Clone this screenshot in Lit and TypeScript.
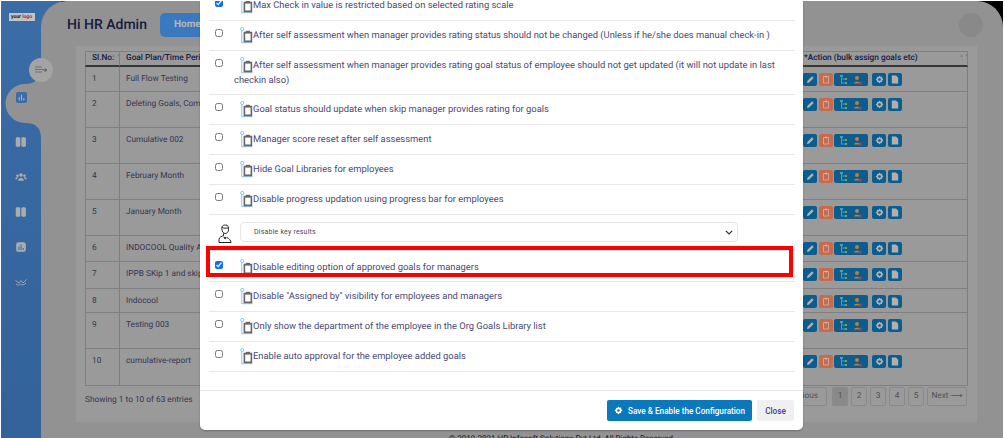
import { LitElement, html, css, svg } from "lit";
import { customElement } from "lit/decorators.js";

const ROWS: [string, string, number][] = [
  ["1", "Full Flow Testing", 25],
  ["2", "Deleting Goals, Completion", 36],
  ["3", "Cumulative 002", 36],
  ["4", "February Month", 36],
  ["5", "January Month", 36],
  ["6", "INDOCOOL Quality Appraisal", 26],
  ["7", "IPPB SKip 1 and skip 2", 27],
  ["8", "Indocool", 24],
  ["9", "Testing 003", 36],
  ["10", "cumulative-report", 37],
];

type Opt = { label: string; checked?: boolean; mark?: boolean; tall?: boolean };
const OPTIONS_A: Opt[] = [
  { label: "Max Check in value is restricted based on selected rating scale", checked: true },
  { label: "After self assessment when manager provides rating status should not be changed (Unless if he/she does manual check-in )" },
  { label: "After self assessment when manager provides rating goal status of employee should not get updated (it will not update in last checkin also)", tall: true },
  { label: "Goal status should update when skip manager provides rating for goals" },
  { label: "Manager score reset after self assessment" },
  { label: "Hide Goal Libraries for employees" },
  { label: "Disable progress updation using progress bar for employees" },
];
const OPTIONS_B: Opt[] = [
  { label: "Disable \"Assigned by\" visibility for employees and managers" },
  { label: "Only show the department of the employee in the Org Goals Library list" },
  { label: "Enable auto approval for the employee added goals" },
];

const clip = html`<svg class="clip" viewBox="0 0 13 17" width="13" height="17">
  <circle cx="2.2" cy="2" r="1.6" fill="none" stroke="#8cc4ec" stroke-width="1"/>
  <path d="M1.8 3.5V15.7H12.5" fill="none" stroke="#8cc4ec" stroke-width="1"/>
  <path d="M4.4 5.6H11.4V14.4H4.4Z" fill="none" stroke="#666" stroke-width="1.6"/>
  <path d="M5.8 3.8H10V6.2H5.8Z" fill="#666"/>
</svg>`;

const book = svg`<rect x="1" y="1.5" width="5.2" height="11" rx="1.5"/><rect x="7.4" y="1.5" width="5.2" height="11" rx="1.5"/>`;
const chart = svg`<rect x="1.5" y="1.5" width="11" height="11" rx="2.5"/><path d="M4.6 6.5V10.5M7 3.8V10.5M9.4 8V10.5" stroke="#4a84c4" stroke-width="1.2"/>`;

@customElement("app-root")
export class AppRoot extends LitElement {
  static styles = css`
    :host { display: block; width: 1005px; height: 438px; background: #fff; overflow: hidden; font-family: Roboto, "Liberation Sans", sans-serif; text-rendering: geometricPrecision; }
    *, *::after { box-sizing: border-box; }
    .shell {
      position: relative; margin: 1px 2px 0 1px; height: 437px; display: flex; overflow: hidden;
      background: linear-gradient(to right, transparent 60px, #000 60px), linear-gradient(#4a88d0, #417bc1);
    }
    .side { flex: none; width: 40px; position: relative; display: flex; flex-direction: column; align-items: center; }
    .logo { width: 26px; height: 8px; margin: 12px 0 0 1px; background: #f4f4f4; font: 700 5px/8px Roboto, sans-serif; color: #222; text-align: center; white-space: nowrap; }
    .logo span { color: #c33; }
    .nav { margin-top: 114px; display: flex; flex-direction: column; align-items: center; gap: 21px; }
    .nav svg { display: block; fill: #d8d8d8; }
    .lobe { position: absolute; left: 0; top: 50px; width: 44px; height: 90px; }
    .lobe-icon { position: absolute; left: 15px; top: 91px; width: 11px; height: 11px; border-radius: 2px; background: #4a88d0; display: flex; align-items: center; justify-content: center; }
    .toggle { position: absolute; left: 28px; top: 57px; width: 24px; height: 24px; border-radius: 50%; background: #cecece; display: flex; align-items: center; justify-content: center; z-index: 1; }
    .main {
      flex: 1; height: 470px; background: #b7b7b7; border-radius: 26px 26px 30px 26px;
      padding: 0 26px 0 35px; display: flex; flex-direction: column; min-width: 0;
    }
    .top { height: 45px; display: flex; align-items: center; flex: none; }
    .hi { margin: 3px 0 0 -9px; font: 500 14px/1 Roboto, sans-serif; color: #1d2450; }
    .home { margin: 2px 0 0 13px; width: 60px; height: 24px; background: #4996f0; border-radius: 5px; color: #e4e4e4; font: 700 10px/24px Roboto, sans-serif; padding-left: 14px; }
    .avatar { margin: 2px -6px 0 auto; width: 24px; height: 24px; border-radius: 50%; background: #acacac; }
    .card { background: #c1c1c1; padding: 5px 9px 0 9px; height: 376px; }
    table { width: 883px; border-collapse: separate; border-spacing: 0; table-layout: fixed; font-size: 8.3px; color: #45456a; }
    th { height: 16px; font: 500 8.3px/13px Roboto, sans-serif; color: #1d2450; text-align: left; padding: 0 0 0 6px; border-top: 1px solid #9f9f9f; border-left: 1px solid #9f9f9f; border-bottom: 2px solid #444; white-space: nowrap; overflow: hidden; position: relative; }
    td { vertical-align: top; padding: 6px 0 0 6px; line-height: 12px; border-left: 1px solid #9f9f9f; border-bottom: 1px solid #9f9f9f; white-space: nowrap; overflow: hidden; }
    th:last-child { border-right: 1px solid #9f9f9f; padding-left: 5px; }
    td:last-child { border-right: 1px solid #9f9f9f; padding-left: 4px; }
    .sort { position: absolute; right: 3px; top: 2px; font-size: 5px; line-height: 5px; color: #a4a4a4; width: 5px; }
    .acts { display: flex; align-items: flex-start; gap: 2px; }
    .b { height: 13px; width: 14px; border-radius: 2px; background: #1073b1; display: flex; align-items: center; justify-content: center; flex: none; }
    .b.o { background: #fb8660; margin-right: 1px; }
    .b.g { width: 34px; justify-content: space-around; padding: 0 3px; margin-left: -2px; margin-right: 2px; }
    .foot { display: flex; justify-content: space-between; align-items: flex-start; margin-top: 1px; }
    .info { font-size: 8.3px; color: #45456a; padding-top: 8px; }
    .pager { display: flex; gap: 3px; margin-right: 1px; font-size: 8.3px; color: #666; }
    .pager span { height: 19px; border: 1px solid #adadad; border-radius: 2px; line-height: 17px; text-align: center; width: 16px; }
    .pager .on { background: #acacac; }
    .pager .wide { width: 40px; }
    .pager .prev { width: 60px; margin-right: 2px; }
    .copy { font-size: 8px; color: #222; margin: 12px 0 0 373px; white-space: nowrap; line-height: 10px; }
    .dim { position: absolute; inset: 0; background: rgba(0, 0, 0, .2); z-index: 2; }
    .modal { position: absolute; z-index: 3; left: 199px; top: -1px; width: 603px; height: 430px; background: #fff; border-radius: 0 0 5px 5px; display: flex; flex-direction: column; box-shadow: 0 1px 2px rgba(0,0,0,.25); }
    .body { flex: 1; min-height: 0; overflow: hidden; padding: 0 8px 0 9px; }
    .list { margin-top: -9px; position: relative; }
    .row { display: flex; height: 30px; padding-top: 6px; border-bottom: 1px solid #e8e8e8; color: #4a4a74; font-size: 9.4px; line-height: 14px; }
    .row.tall { height: 44px; }
    .row input { flex: none; width: 8px; height: 8px; margin: 2px 11px 0 6px; accent-color: #0d6efd; }
    .label { flex: 1; min-width: 0; }
    .clip { vertical-align: -6px; margin-left: 6px; }
    .sel { height: 36px; display: flex; align-items: center; border-bottom: 1px solid #e8e8e8; padding-left: 9px; padding-bottom: 1px; }
    .sel svg { flex: none; margin-right: 8px; margin-top: 3px; }
    select { appearance: none; width: 498px; height: 20px; border: 1px solid #e6e6e6; border-radius: 4px; color: #4a4a5a; font: 400 7px Roboto, sans-serif; letter-spacing: .2px; padding-left: 13px;
      background: #fff url("data:image/svg+xml,%3Csvg xmlns='http://www.w3.org/2000/svg' width='8' height='5' viewBox='0 0 8 5'%3E%3Cpath d='M.8.8 4 4l3.2-3.2' fill='none' stroke='%23333' stroke-width='1.2'/%3E%3C/svg%3E") no-repeat right 4px center; }
    .row.marked { position: relative; height: 31px; padding-top: 8px; }
    .marked::after { content: ""; position: absolute; left: -3px; right: 2px; top: -5px; height: 31px; border: 4px solid #f00; pointer-events: none; }
    .actions { flex: none; height: 40px; border-top: 1px solid #e8e8e8; display: flex; justify-content: flex-end; align-items: flex-start; gap: 5px; padding: 9px 9px 0 0; }
    .save { width: 145px; height: 21px; border: 0; border-radius: 2px; background: #0a78bb; color: #fff; font: 500 8.2px Roboto, sans-serif; display: flex; align-items: center; justify-content: center; gap: 5px; white-space: nowrap; padding: 0; }
    .close { width: 37px; height: 21px; border: 0; border-radius: 2px; background: #f0f0f3; color: #4a3f80; font: 500 8.2px Roboto, sans-serif; padding: 0; }
  `;

  private opt(o: Opt) {
    return html`<div class="row ${o.mark ? "marked" : ""} ${o.tall ? "tall" : ""}">
      <input type="checkbox" .checked=${!!o.checked} />
      <div class="label">${clip}${o.label}</div>
    </div>`;
  }

  private actions() {
    return html`<div class="acts">
      <span class="b"><svg width="9" height="9" viewBox="0 0 9 9"><path d="M1 8 1.5 5.8 6 1.3 7.7 3 3.2 7.5Z" fill="#ddd"/></svg></span>
      <span class="b o"><svg width="8" height="9" viewBox="0 0 8 9"><path d="M1.5 1.5H6.5V8H1.5Z" fill="none" stroke="#fff" stroke-opacity=".6"/><path d="M3 .8H5V2.4H3Z" fill="#fff" fill-opacity=".6"/></svg></span>
      <span class="b g">
        <svg width="8" height="10" viewBox="0 0 8 10"><path d="M1.5 1V8.5M1.5 4H5.5M1.5 8H5.5" stroke="#5fc8c8" stroke-width="1" fill="none"/><rect x="0" y="0" width="3" height="2" fill="#5fc8c8"/><rect x="5" y="3" width="2" height="2" fill="#8bcf6a"/><rect x="5" y="7" width="2" height="2" fill="#8bcf6a"/></svg>
        <svg width="9" height="10" viewBox="0 0 9 10"><circle cx="4" cy="3" r="2" fill="#f0a040"/><path d="M1 8.5C1 6 7 6 7 8.5Z" fill="#f0a040"/><circle cx="7.3" cy="8" r="1.6" fill="#e0504a"/></svg>
      </span>
      <span class="b"><svg width="9" height="9" viewBox="0 0 10 10"><path d="M5 .6 6 2l1.7-.3.3 1.7L9.4 5 8 6l-.3 1.7L6 8l-1 1.4L4 8l-1.7-.3L2 6 .6 5 2 4l.3-1.7L4 2Z" fill="#ddd"/><circle cx="5" cy="5" r="1.4" fill="#1073b1"/></svg></span>
      <span class="b"><svg width="8" height="9" viewBox="0 0 8 9"><path d="M.8.5H5L7.2 2.7V8.5H.8Z" fill="#ddd"/></svg></span>
    </div>`;
  }

  render() {
    return html`<div class="shell">
      <aside class="side">
        <div class="logo">your <span>logo</span></div>
        <svg class="lobe" viewBox="0 0 44 90"><path d="M40 13C40 28 34 33 24 33A19.5 19.5 0 0 0 24 72C34 72 40 76 40 87Z" fill="#b7b7b7"/></svg>
        <div class="toggle"><svg width="12" height="8" viewBox="0 0 12 8"><path d="M0 1H7M0 3.5H8M0 6H7" stroke="#8a8a8a" stroke-width="1"/><path d="M8 4H11.5M10 2.3 11.7 4 10 5.7" stroke="#666" fill="none" stroke-width="1"/></svg></div>
        <div class="lobe-icon"><svg width="9" height="9" viewBox="0 0 9 9"><path d="M2.2 4V7.5M4.5 1.8V7.5M6.8 5V7.5" stroke="#ddd" stroke-width="1.1"/></svg></div>
        <nav class="nav">
          <svg width="14" height="14" viewBox="-1 -1 16 16">${book}</svg>
          <svg width="14" height="14" viewBox="-1.5 -1.5 17 17"><circle cx="7" cy="4.5" r="2.2"/><circle cx="2.8" cy="5.5" r="1.6"/><circle cx="11.2" cy="5.5" r="1.6"/><path d="M3.5 11.5C3.5 7 10.5 7 10.5 11.5ZM0 9.8C0 7.5 2.4 7 3.4 7.6 2.6 8.4 2.5 9 2.5 9.8ZM14 9.8C14 7.5 11.6 7 10.6 7.6 11.4 8.4 11.5 9 11.5 9.8Z"/></svg>
          <svg width="14" height="14" viewBox="-1 -1 16 16">${book}</svg>
          <svg width="14" height="14" viewBox="-1 -1 16 16">${chart}</svg>
          <svg width="14" height="14" viewBox="0 0 14 14"><path d="M1.5 5.5 5 8 7 5.5 9 8 12.5 4.5M2 9C4 10.5 5 10.5 6.5 9 8 10.5 10 10 12 8" fill="none" stroke="#d8d8d8" stroke-width=".9"/></svg>
        </nav>
      </aside>
      <main class="main">
        <header class="top">
          <h1 class="hi">Hi HR Admin</h1>
          <div class="home">Home</div>
          <div class="avatar"></div>
        </header>
        <section class="card">
          <table>
            <colgroup><col style="width:34px" /><col /><col style="width:170px" /></colgroup>
            <thead><tr>
              <th>Sl.No.<span class="sort">▲▼</span></th>
              <th>Goal Plan/Time Period<span class="sort">▲▼</span></th>
              <th>*Action (bulk assign goals etc)<span class="sort">▲▼</span></th>
            </tr></thead>
            <tbody>
              ${ROWS.map(r => html`<tr style="height:${r[2]}px"><td>${r[0]}</td><td>${r[1]}</td><td>${this.actions()}</td></tr>`)}
            </tbody>
          </table>
          <div class="foot">
            <div class="info">Showing 1 to 10 of 63 entries</div>
            <div class="pager">
              <span class="wide prev">← Previous</span><span class="on">1</span><span>2</span><span>3</span><span>4</span><span>5</span><span class="wide">Next ⟶</span>
            </div>
          </div>
        </section>
        <footer class="copy">© 2019-2021 HR Infosoft Solutions Pvt Ltd. All Rights Reserved</footer>
      </main>
      <div class="dim"></div>
      <div class="modal">
        <div class="body"><div class="list">
          ${OPTIONS_A.map(o => this.opt(o))}
          <div class="sel">
            <svg width="14" height="20" viewBox="0 0 14 20"><path d="M4 5.5C3 2.5 5 1 7.5 1S11 3 10.5 5.5C10.5 8 9 9.5 7.2 9.5S4.2 8 4 5.5ZM4 3.5C6 4.5 8 4 10.5 4M5.5 9.5V11.5C3.5 12.5 1 13 1 15.5V18.5H13C13 16.5 11 14.5 9 13.5" fill="none" stroke="#222" stroke-width="1"/><path d="M5 12.5 9 13.5 7 15.5Z" fill="#222"/></svg>
            <select><option>Disable key results</option></select>
          </div>
          ${this.opt({ label: "Disable editing option of approved goals for managers", checked: true, mark: true })}
          ${OPTIONS_B.map(o => this.opt(o))}
        </div></div>
        <div class="actions">
          <button class="save"><svg width="9" height="9" viewBox="0 0 10 10"><path d="M5 .6 6 2l1.7-.3.3 1.7L9.4 5 8 6l-.3 1.7L6 8l-1 1.4L4 8l-1.7-.3L2 6 .6 5 2 4l.3-1.7L4 2Z" fill="#fff"/><circle cx="5" cy="5" r="1.4" fill="#0a78bb"/></svg>Save &amp; Enable the Configuration</button>
          <button class="close">Close</button>
        </div>
      </div>
    </div>`;
  }
}
